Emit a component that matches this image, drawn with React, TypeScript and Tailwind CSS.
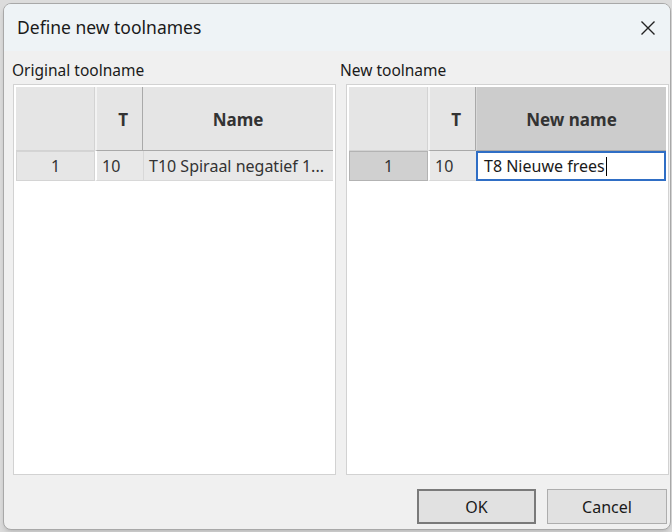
import React from "react";

const font = { fontFamily: '"Segoe UI", "Noto Sans", "Open Sans", sans-serif' };

function HeaderRow({ last, lastActive }: { last: string; lastActive?: boolean }) {
	return (
		<div className="flex h-[64px]">
			<div className="w-[79px] shrink-0 bg-[#e5e5e5] border-r border-b border-[#d3d3d3]" />
			<div className="w-[48px] shrink-0 bg-[#e5e5e5] border-b border-r border-[#a9a9a9] border-l-2 border-l-[#f2f2f2] flex items-center justify-end pr-[14px] pt-[3px] text-[17px] font-bold text-[#333]">
				T
			</div>
			<div
				className={`flex-1 flex items-center justify-center pt-[3px] text-[17px] font-bold text-[#333] border-b border-[#a9a9a9] ${
					lastActive ? "bg-[#cccccc] border-l border-l-[#d9d9d9]" : "bg-[#e5e5e5]"
				}`}
			>
				{last}
			</div>
		</div>
	);
}

function Panel({ children }: { children: React.ReactNode }) {
	return (
		<div className="h-[391px] border border-[#d2d2d2] bg-white p-[2px]">{children}</div>
	);
}

export default function App() {
	return (
		<div className="w-[672px] h-[532px] overflow-hidden bg-[#dcdcdc] pl-[3px] pt-[3px]" style={font}>
			<div className="w-[668px] h-[527px] rounded-lg border border-[#a8a8a8] bg-[#f0f0f0] shadow-md overflow-hidden flex flex-col">
				<div className="h-[47px] shrink-0 bg-[#eef3f6] flex items-center justify-between pl-[13px] pr-[12px]">
					<span className="text-[17.5px] text-[#1a1a1a] -mt-[1px]">Define new toolnames</span>
					<svg width="16" height="16" viewBox="0 0 16 16" className="mr-[2px]">
						<path d="M1.5 1.5 L14.5 14.5 M14.5 1.5 L1.5 14.5" stroke="#222" strokeWidth="1.4" />
					</svg>
				</div>
				<div className="flex-1 flex flex-col pl-[9px] pr-[1px]">
					<div className="grid grid-cols-2 gap-[10px]">
						<div>
							<div className="h-[33px] pt-[9px] text-[15.5px] text-[#1a1a1a] leading-[20px] -ml-[1px]">Original toolname</div>
							<Panel>
								<HeaderRow last="Name" />
								<div className="flex h-[30px] text-[16px] text-[#333]">
									<div className="w-[79px] shrink-0 bg-[#e6e6e6] border border-[#d4d4d4] flex items-center justify-center">1</div>
									<div className="w-[48px] shrink-0 bg-[#e8e8e8] border-l-2 border-white border-b border-b-[#d8d8d8] flex items-center pl-[5px]">10</div>
									<div className="flex-1 bg-[#e8e8e8] border-l border-[#d8d8d8] border-b border-b-[#d8d8d8] flex items-center pl-[5px] whitespace-nowrap overflow-hidden">
										T10 Spiraal negatief 1...
									</div>
								</div>
							</Panel>
						</div>
						<div>
							<div className="h-[33px] pt-[9px] text-[15.5px] text-[#1a1a1a] leading-[20px] -ml-[6px]">New toolname</div>
							<Panel>
								<HeaderRow last="New name" lastActive />
								<div className="flex h-[30px] text-[16px] text-[#333]">
									<div className="w-[79px] shrink-0 bg-[#d0d0d0] border border-[#b3b3b3] flex items-center justify-center">1</div>
									<div className="w-[48px] shrink-0 bg-[#e8e8e8] border-l-2 border-white border-b border-b-[#d8d8d8] flex items-center pl-[5px]">10</div>
									<div className="flex-1 bg-white border-2 border-[#2f6ec5] flex items-center pl-[6px] whitespace-nowrap overflow-hidden text-[#1a1a1a]">
										T8 Nieuwe frees
										<span className="inline-block w-[1px] h-[19px] bg-black ml-[1px]" />
									</div>
								</div>
							</Panel>
						</div>
					</div>
					<div className="flex justify-end gap-[11px] mt-[14px] pr-[2px]">
						<button className="w-[119px] h-[35px] bg-[#e1e1e1] border-2 border-[#7a7a7a] text-[16px] text-[#1a1a1a]">
							OK
						</button>
						<button className="w-[120px] h-[35px] bg-[#e1e1e1] border border-[#adadad] text-[16px] text-[#1a1a1a]">
							Cancel
						</button>
					</div>
				</div>
			</div>
		</div>
	);
}
